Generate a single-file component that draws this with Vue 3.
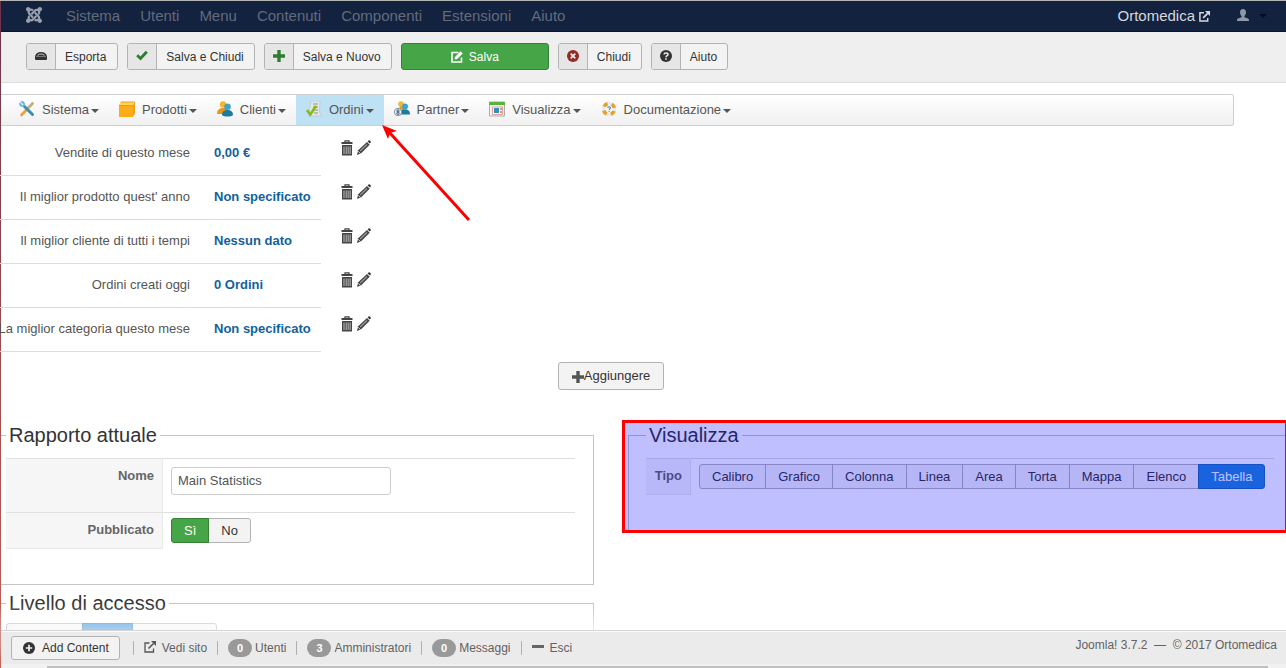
<script setup>
import { ref } from 'vue'

const navItems = ['Sistema', 'Utenti', 'Menu', 'Contenuti', 'Componenti', 'Estensioni', 'Aiuto']
const menuItems = [
  { label: 'Sistema', icon: 'tools' },
  { label: 'Prodotti', icon: 'box' },
  { label: 'Clienti', icon: 'people' },
  { label: 'Ordini', icon: 'order', active: true },
  { label: 'Partner', icon: 'partner' },
  { label: 'Visualizza', icon: 'view' },
  { label: 'Documentazione', icon: 'help' },
]
const stats = [
  { label: 'Vendite di questo mese', value: '0,00 €' },
  { label: "Il miglior prodotto quest' anno", value: 'Non specificato' },
  { label: 'Il miglior cliente di tutti i tempi', value: 'Nessun dato' },
  { label: 'Ordini creati oggi', value: '0 Ordini' },
  { label: 'La miglior categoria questo mese', value: 'Non specificato' },
]
const types = ['Calibro', 'Grafico', 'Colonna', 'Linea', 'Area', 'Torta', 'Mappa', 'Elenco', 'Tabella']
const counters = [
  { count: 0, label: 'Utenti' },
  { count: 3, label: 'Amministratori' },
  { count: 0, label: 'Messaggi' },
]
const name = ref('Main Statistics')
const published = ref('yes')
const type = ref('Tabella')
</script>

<template>
  <div class="page">
    <header class="navbar">
      <a href="#" class="brand" aria-label="Joomla">
        <svg width="16" height="16" viewBox="0 0 24 24" fill="#98a0ad">
          <path d="M16.719 14.759L14.22 17.260l-2.370 2.370-.462.466c-1.368 1.365-3.297 1.830-5.047 1.397-.327 1.424-1.604 2.490-3.130 2.490C1.438 23.983 0 22.547 0 20.772c0-1.518 1.055-2.789 2.469-3.123-.446-1.760.016-3.705 1.396-5.080l.179-.180 2.370 2.370-.184.181c-.769.779-.769 2.024 0 2.789.771.780 2.022.780 2.787 0l.465-.465 2.367-2.371 2.502-2.506 2.368 2.372z" />
          <path d="M17.643 21.411c-1.822.563-3.884.120-5.328-1.318l-.180-.185 2.365-2.369.180.184c.771.768 2.018.768 2.787 0 .765-.765.769-2.010-.004-2.781l-.466-.465-2.365-2.370-2.502-2.503 2.370-2.369 2.499 2.505 2.367 2.370.464.464c1.365 1.360 1.846 3.278 1.411 5.021 1.560.224 2.759 1.560 2.759 3.180 0 1.784-1.439 3.210-3.209 3.210-1.545 0-2.851-1.096-3.135-2.565z" />
          <path d="M6.975 9.461l2.508-2.505 2.370-2.369.462-.461c1.442-1.442 3.500-1.891 5.318-1.330.170-1.611 1.553-2.779 3.208-2.779 1.771 0 3.210 1.437 3.210 3.211 0 1.631-1.216 2.978-2.790 3.186.519 1.799.068 3.816-1.350 5.234l-.182.184-2.369-2.369.184-.184c.769-.770.769-2.016 0-2.783-.766-.766-2.011-.768-2.781.003l-.462.461-2.370 2.369-2.505 2.502z" />
          <path d="M2.322 6.391C.984 6.062-.015 4.834 0 3.359.016 1.500 1.440.067 3.210.067c1.530 0 2.805 1.070 3.130 2.500 1.755-.450 3.697.013 5.070 1.387l.182.180-2.370 2.370-.180-.184c-.771-.770-2.021-.770-2.787 0-.771.770-.771 2.014 0 2.784l.465.464 2.370 2.370 2.497 2.506-2.370 2.370-2.497-2.500-2.371-2.370-.466-.466C2.546 10.057 2.070 8.178 2.322 6.391z" />
        </svg>
      </a>
      <nav class="nav">
        <a v-for="item in navItems" :key="item" href="#">{{ item }}</a>
      </nav>
      <a href="#" class="site">Ortomedica
        <svg width="11" height="11" viewBox="0 0 12 12" fill="none" stroke="#d5d8dd" stroke-width="1.600">
          <path d="M5.500 2H1v9h8.500V7.500" /><path d="M4.500 7.500L9.500 2.500" stroke-width="2" /><path d="M6.500 0H12v5.500z" fill="#d5d8dd" stroke="none" />
        </svg>
      </a>
      <a href="#" class="user" aria-label="Utente">
        <svg width="12" height="12" viewBox="0 0 12 12" fill="#8f98a6">
          <path d="M6 0c2 0 3 1.300 3 3.200C9 5 8.200 6.300 7.400 7v1.200l3.600 1.300c.7.300 1 .7 1 2.500H0c0-1.800.3-2.200 1-2.500l3.600-1.300V7C3.800 6.300 3 5 3 3.200 3 1.300 4 0 6 0z" />
        </svg>
        <span class="caret dark"></span>
      </a>
    </header>

    <div class="toolbar">
      <button class="tool" type="button">
        <span class="tool-icon">
          <svg width="12" height="12" viewBox="0 0 12 12"><path d="M0 6.500C.5 3.500 2.500 2 6 2s5.500 1.500 6 4.500V9a1 1 0 0 1-1 1H1a1 1 0 0 1-1-1z" fill="#333" /><path d="M2 5.500C3 4 4 3.500 6 3.500S9 4 10 5.500z" fill="#aaa" /><path d="M4 4.700h4v1.300H4z" fill="#333" /><path d="M1 6.500h10" stroke="#888" stroke-width=".8" /></svg>
        </span><span class="tool-text">Esporta</span>
      </button>
      <button class="tool" type="button">
        <span class="tool-icon">
          <svg width="12" height="12" viewBox="0 0 12 12"><path d="M1.200 5.300L4.500 8.500l6.300-6.800" fill="none" stroke="#2f7d32" stroke-width="2.900" /></svg>
        </span><span class="tool-text">Salva e Chiudi</span>
      </button>
      <button class="tool" type="button">
        <span class="tool-icon">
          <svg width="12" height="12" viewBox="0 0 12 12"><path d="M4.300 0h3.400v4.300H12v3.400H7.700V12H4.300V7.700H0V4.300h4.300z" fill="#2f7d32" /></svg>
        </span><span class="tool-text">Salva e Nuovo</span>
      </button>
      <button class="tool save" type="button">
        <svg width="12" height="12" viewBox="0 0 12 12"><path d="M7.500 1.500H1v9.500h9.500V6.500" fill="none" stroke="#fff" stroke-width="1.600" /><path d="M3.500 8.600l.5-2.700L9.600.2l2.200 2.200-5.600 5.700z" fill="#fff" /></svg>
        Salva
      </button>
      <button class="tool" type="button">
        <span class="tool-icon">
          <svg width="12" height="12" viewBox="0 0 12 12"><circle cx="6" cy="6" r="6" fill="#942a25" /><path d="M3.700 3.700l4.600 4.600M8.300 3.700L3.700 8.300" stroke="#eee" stroke-width="1.700" /></svg>
        </span><span class="tool-text">Chiudi</span>
      </button>
      <button class="tool" type="button">
        <span class="tool-icon">
          <svg width="12" height="12" viewBox="0 0 12 12"><circle cx="6" cy="6" r="6" fill="#333" /><path d="M4 4.500c.2-2 4-2 4 0C8 5.800 6 5.600 6 7.200" fill="none" stroke="#eee" stroke-width="1.500" /><path d="M5.200 8.300h1.600v1.500H5.200z" fill="#eee" /></svg>
        </span><span class="tool-text">Aiuto</span>
      </button>
    </div>

    <main class="content">
      <nav class="menu">
        <a v-for="item in menuItems" :key="item.label" href="#" :class="{ active: item.active }">
          <svg class="menu-icon" width="16" height="16" viewBox="0 0 16 16">
            <template v-if="item.icon === 'tools'">
              <path d="M2.500 14L13.500 2.500" stroke="#f0a030" stroke-width="2.600" stroke-linecap="round" />
              <path d="M8 8.200L14 1.600" stroke="#a9b4bb" stroke-width="1.500" />
              <path d="M4 4l9.500 9.500" stroke="#3b8fae" stroke-width="3" stroke-linecap="round" />
              <path d="M0 2.500L2.500 0C5 0 6.500 2 6 4.500L4.500 6C2 6.500 0 5 0 2.500z" fill="#6db6d0" />
              <path d="M1.500 1.500l2.500 2.500" stroke="#d8edf5" stroke-width="1.400" />
            </template>
            <template v-else-if="item.icon === 'box'">
              <path d="M0 4h14v12H0z" fill="#fbad18" /><path d="M0 4l2-4h14l-2 4z" fill="#ffd45e" /><path d="M14 4l2-4v12l-2 4z" fill="#f0a01a" /><path d="M2 1.500h12" stroke="#f3b63a" /><path d="M0 4.500h14" stroke="#f19a0a" />
            </template>
            <template v-else-if="item.icon === 'people'">
              <circle cx="6" cy="3.500" r="3.200" fill="#f7b530" /><path d="M0 13c0-4 2-5 4.500-6h4l2 6z" fill="#e99819" />
              <circle cx="10.500" cy="5.800" r="3.300" fill="#41a4c4" /><path d="M5 14c0-3.500 2-4 4-5h3c2 .8 4 1.500 4 5-2 2-9 2-11 0z" fill="#1d7ba0" />
            </template>
            <template v-else-if="item.icon === 'order'">
              <path d="M5 0h9l-.5 11 2.500 4H2z" fill="#e3e5e6" stroke="#b8bdc0" stroke-width=".6" /><path d="M7 3h5M7 6h5M8 9h4M8 12h4" stroke="#8b9398" /><path d="M1 9l3.300 4.500L10 5" fill="none" stroke="#85b91c" stroke-width="2.700" />
            </template>
            <template v-else-if="item.icon === 'partner'">
              <circle cx="7" cy="3" r="2.800" fill="#f7b530" /><path d="M4 10l2-5h4l1 5z" fill="#eba21c" /><circle cx="11" cy="5.500" r="3" fill="#41a4c4" /><path d="M5 13.500c1-3 2-4 4-5h4c2 1 3 2 3 5z" fill="#1d7ba0" />
              <circle cx="4" cy="11" r="3.700" fill="#eef4f6" stroke="#7c98a3" /><circle cx="4" cy="9.900" r="1.100" fill="none" stroke="#456" /><circle cx="4" cy="12.200" r="1.200" fill="none" stroke="#456" />
            </template>
            <template v-else-if="item.icon === 'view'">
              <path d="M.5 1h15v14H.5z" fill="#f3f3f3" stroke="#a9adae" /><path d="M0 1h16v3H0z" fill="#59b33c" /><path d="M3.500 6h10v7.500h-10z" fill="#fff" stroke="#e3a192" /><path d="M5 7h5v5H5z" fill="#338ebd" /><path d="M11 8h2M11 11h2" stroke="#e66a4c" stroke-width="1.600" />
            </template>
            <template v-else>
              <circle cx="8" cy="8" r="5.500" fill="none" stroke="#e7e9ea" stroke-width="3.600" /><circle cx="8" cy="8" r="5.500" fill="none" stroke="#e7a126" stroke-width="3.600" stroke-dasharray="4.300 4.340" stroke-dashoffset="-2.200" />
              <path d="M6.800 7c0-1.800 2.700-1.600 2.700-.2 0 1-1.300 1-1.300 2.200M8.200 10v1" fill="none" stroke="#3591bb" stroke-width="1.100" />
            </template>
          </svg>
          <span>{{ item.label }}</span>
          <span class="caret"></span>
          <svg v-if="item.active" class="arrow" width="92" height="100" viewBox="0 0 92 100">
            <path d="M7 7L87 95" stroke="red" stroke-width="3" /><path d="M0 0l15 6-7 2-2 6z" fill="red" />
          </svg>
        </a>
      </nav>

      <table class="stats">
        <tbody>
          <tr v-for="row in stats" :key="row.label">
            <th scope="row">{{ row.label }}</th>
            <td class="value">{{ row.value }}</td>
            <td class="actions">
              <button type="button" aria-label="Elimina">
                <svg width="12" height="16" viewBox="0 0 12 16"><path d="M4 2V.8h4V2" fill="none" stroke="#444" stroke-width="1.300" /><path d="M.5 2h11v2H.5z" fill="#444" /><path d="M1 5h10v10.500H1z" fill="#444" /><path d="M3 6.500v7.500M5.200 6.500v7.500M7.200 6.500v7.500M9.200 6.500v7.500" stroke="#aaa" stroke-width="1.200" /></svg>
              </button>
              <button type="button" aria-label="Modifica">
                <svg width="14" height="16" viewBox="0 0 14 16"><path d="M0 15l1.200-4.800L10 2l2.700 2.700-8.500 8.500z" fill="#444" /><path d="M3.200 11L10 4.500" stroke="#999" stroke-width="1.100" /><path d="M10.600 1.400l1-.9c1-.6 2.700 1 2.100 2.100l-.8 1z" fill="#333" /><path d="M1.200 11.300l2.400 2.200" stroke="#ddd" stroke-width=".9" /></svg>
              </button>
            </td>
          </tr>
        </tbody>
      </table>

      <div class="add-row">
        <button class="add" type="button">
          <svg width="12" height="12" viewBox="0 0 12 12"><path d="M4.300 0h3.400v4.300H12v3.400H7.700V12H4.300V7.700H0V4.300h4.300z" fill="#555" /></svg>Aggiungere
        </button>
      </div>

      <div class="columns">
        <div class="left">
          <fieldset class="panel open-left">
            <legend>Rapporto attuale</legend>
            <table class="form">
              <tbody>
                <tr class="tall">
                  <th scope="row"><label for="name">Nome</label></th>
                  <td><input id="name" v-model="name" class="text" type="text"></td>
                </tr>
                <tr>
                  <th scope="row">Pubblicato</th>
                  <td class="tight">
                    <div class="group">
                      <button type="button" :class="{ yes: published === 'yes' }" @click="published = 'yes'">Sì</button>
                      <button type="button" :class="{ yes: published === 'no' }" @click="published = 'no'">No</button>
                    </div>
                  </td>
                </tr>
              </tbody>
            </table>
          </fieldset>
          <fieldset class="panel open-left access">
            <legend>Livello di accesso</legend>
            <div class="group levels">
              <button type="button" class="first"></button>
              <button type="button" class="picked"></button>
              <button type="button" class="last"></button>
            </div>
          </fieldset>
        </div>

        <div class="right">
          <fieldset class="panel open-right">
            <legend>Visualizza</legend>
            <table class="form short">
              <tbody>
                <tr>
                  <th scope="row">Tipo</th>
                  <td class="tight">
                    <div class="group">
                      <button v-for="t in types" :key="t" type="button" :class="{ picked: type === t }" @click="type = t">{{ t }}</button>
                    </div>
                  </td>
                </tr>
              </tbody>
            </table>
          </fieldset>
          <div class="highlight"></div>
        </div>
      </div>
    </main>

    <footer class="status">
      <div class="status-bar">
        <button class="add-content" type="button">
          <svg width="12" height="12" viewBox="0 0 12 12"><circle cx="6" cy="6" r="6" fill="#333" /><path d="M6 2.800v6.400M2.800 6h6.400" stroke="#f3f3f3" stroke-width="1.700" /></svg>
          Add Content
        </button>
        <a href="#" class="entry">
          <svg class="gap" width="12" height="12" viewBox="0 0 12 12" fill="none" stroke="#555" stroke-width="1.300"><path d="M5.500 2H1v9h8.500V7.500" /><path d="M4.500 7.500L9.500 2.500" stroke-width="1.600" /><path d="M7 0H12v5z" fill="#555" stroke="none" /></svg>
          Vedi sito
        </a>
        <a v-for="c in counters" :key="c.label" href="#" class="entry"><span class="badge">{{ c.count }}</span>{{ c.label }}</a>
        <a href="#" class="entry">
          <svg class="gap" width="12" height="12" viewBox="0 0 12 12"><path d="M0 4h12v3H0z" fill="#666" /></svg>
          Esci
        </a>
        <p class="copy">Joomla! 3.7.2 &nbsp;—&nbsp; © 2017 Ortomedica</p>
      </div>
      <div class="scroll"><div class="thumb"></div></div>
    </footer>
  </div>
</template>

<style>
body { margin: 0; }
</style>

<style scoped>
* { box-sizing: border-box; }
.page {
  height: 100vh;
  display: flex;
  flex-direction: column;
  overflow: hidden;
  padding-left: 1px;
  border-top: 1px solid #b3b5b2;
  background: linear-gradient(#6d3347, #c46155) left / 1px 100% no-repeat, #fff;
  font: 13px/18px "Liberation Sans", Arial, sans-serif;
  color: #555;
}
a { color: inherit; text-decoration: none; }
button, input { font: inherit; color: #333; margin: 0; }
svg { flex: none; display: block; }
.caret {
  width: 0;
  height: 0;
  border: 4px solid transparent;
  border-top-color: #555;
  border-bottom: 0;
}
.caret.dark { border-top-color: #060d1a; margin-left: 10px; }

.navbar {
  flex: none;
  display: flex;
  align-items: center;
  height: 31px;
  padding: 0 19px 0 25px;
  background: #13223f;
  border-bottom: 1px solid #0a1630;
  font-size: 15px;
}
.brand { margin-top: -2px; }
.nav { display: flex; gap: 20px; margin-left: 24px; flex: 1; color: #626b7c; }
.site { display: flex; align-items: center; gap: 4px; color: #d5d8dd; }
.user { display: flex; align-items: center; margin-left: 27px; }
.user svg { margin-top: -2px; }

.toolbar {
  flex: none;
  display: flex;
  gap: 9px;
  padding: 11px 25px 12px;
  background: #efefef;
  border-bottom: 1px solid #ddd;
}
.tool {
  display: flex;
  align-items: center;
  height: 27px;
  padding: 0;
  overflow: hidden;
  border: 1px solid #b3b3b3;
  border-radius: 3px;
  background: #f3f3f3;
  font-size: 12px;
}
.tool-icon {
  display: flex;
  align-items: center;
  justify-content: center;
  width: 29px;
  height: 25px;
  padding-bottom: 2px;
  background: #e6e6e6;
  border-right: 1px solid #b3b3b3;
}
.tool-text { padding: 0 10px 0 9px; }
.tool:first-child .tool-text { padding-right: 11px; }
.save {
  justify-content: center;
  gap: 6px;
  width: 148px;
  background: #46a546;
  border-color: #378137;
  color: #fff;
}

.content { flex: 1; min-height: 0; overflow: hidden; padding-top: 11px; margin-left: -1px; padding-left: 1px; }
.menu {
  display: flex;
  margin-right: 52px;
  padding-left: 8px;
  border: 1px solid #d0d0d0;
  border-left: 0;
  border-radius: 0 3px 3px 0;
  background: linear-gradient(#fff, #f0f0f0);
}
.menu a { position: relative; display: flex; align-items: center; height: 30px; padding: 0 10px; }
.menu .active { background: #bfe1f4; }
.menu-icon { margin-right: 7px; margin-top: -2px; }
.menu .caret { margin-left: 2px; margin-top: 2px; }
.arrow { position: absolute; left: calc(100% - 2px); top: 100%; z-index: 2; }

.stats { margin: 5px 0 0 -10px; border-collapse: collapse; }
.stats th, .stats td { height: 44px; padding: 0; border-bottom: 1px solid #ddd; white-space: nowrap; }
.stats th { width: 199px; font-weight: normal; text-align: right; }
.stats .value { width: 131px; padding-left: 24px; font-weight: bold; color: #13619b; }
.stats .actions { border-bottom: 0; padding: 0 0 12px 20px; vertical-align: middle; }
.actions button { padding: 0; border: 0; background: none; margin-right: 4px; vertical-align: middle; }

.add-row { display: flex; justify-content: center; margin: 10px 65px 32px 0; }
.add {
  display: flex;
  align-items: center;
  height: 28px;
  padding: 0 13px;
  border: 1px solid #b3b3b3;
  border-radius: 3px;
  background: #f3f3f3;
}
.add svg { margin-top: 3px; }

.columns { display: grid; grid-template-columns: minmax(0, 593fr) minmax(0, 658fr); gap: 34px; align-items: start; }
.panel { margin: 0 0 5px; min-width: 0; border: 1px solid #c5c5c5; padding: 9px 18px 35px 5px; }
.open-left { border-left: 0; }
.open-right { border-right: 0; margin: 0; padding: 9px 12px 35px 17px; }
.panel legend { padding: 0 3px; font-size: 20px; line-height: 27px; color: #333; }
.form { width: 100%; border-collapse: separate; border-spacing: 0; }
.form th, .form td { padding: 8px; border-top: 1px solid #ddd; vertical-align: top; height: 37px; }
.form th {
  width: 157px;
  background: #f6f6f6;
  border-right: 1px solid #e9e9e9;
  border-top-color: #e2e2e2;
  text-align: right;
  color: #666;
}
.form tr:last-child th { border-bottom: 1px solid #e9e9e9; }
.form .tall th, .form .tall td { height: 54px; }
.form.short th { width: 45px; }
.form td.tight { padding: 5px 8px 0; }
.text {
  display: block;
  width: 220px;
  height: 28px;
  padding: 0 6px;
  border: 1px solid #ccc;
  border-radius: 3px;
  background: #fff;
  color: #555;
}
.group { display: flex; }
.group button {
  height: 25px;
  padding: 1px 12px 0;
  border: 1px solid #b3b3b3;
  background: #f3f3f3;
  line-height: 18px;
}
.group button + button { margin-left: -1px; }
.group button:first-child { border-radius: 3px 0 0 3px; }
.group button:last-child { border-radius: 0 3px 3px 0; }
.group .yes { position: relative; background: #46a546; border-color: #378137; color: #fff; }
.group .picked { position: relative; background: #2384d3; border-color: #1c6ab0; color: #fff; }
.access { padding-top: 6px; }
.levels .first { width: 77px; }
.levels .picked { width: 51px; }
.levels .last { width: 85px; }
.right { position: relative; }
.highlight {
  position: absolute;
  inset: -2px -2px -2px -6px;
  border: 3px solid #f00;
  background: rgba(0, 0, 255, 0.25);
  background-clip: padding-box;
  pointer-events: none;
}

.status {
  flex: none;
  position: relative;
  z-index: 3;
  border-top: 1px solid #d4d4d4;
  background: #ebebeb;
  box-shadow: 0 1px 0 rgba(255, 255, 255, 0.8) inset, 0 -15px 15px rgba(255, 255, 255, 0.6);
  font-size: 12px;
  color: #626262;
}
.status-bar { display: flex; align-items: center; height: 33px; padding: 0 9px 0 10px; }
.add-content {
  display: flex;
  align-items: center;
  gap: 7px;
  height: 24px;
  margin-right: 13px;
  padding: 0 10px 0 11px;
  border: 1px solid #b3b3b3;
  border-radius: 3px;
  background: #f3f3f3;
}
.entry { display: flex; align-items: center; height: 14px; padding: 0 10px; border-left: 1px solid #b0b0b0; white-space: nowrap; }
.entry .gap { margin-right: 6px; margin-top: -2px; }
.badge {
  width: 24px;
  margin-right: 3px;
  border-radius: 9px;
  background: #999;
  color: #fff;
  font-size: 11px;
  font-weight: bold;
  text-align: center;
}
.copy { margin: 0 0 6px auto; }
.scroll { height: 4px; padding: 2px 18px 0 46px; background: #f1f1f1; }
.thumb { height: 2px; background: #c1c1c1; }
</style>
